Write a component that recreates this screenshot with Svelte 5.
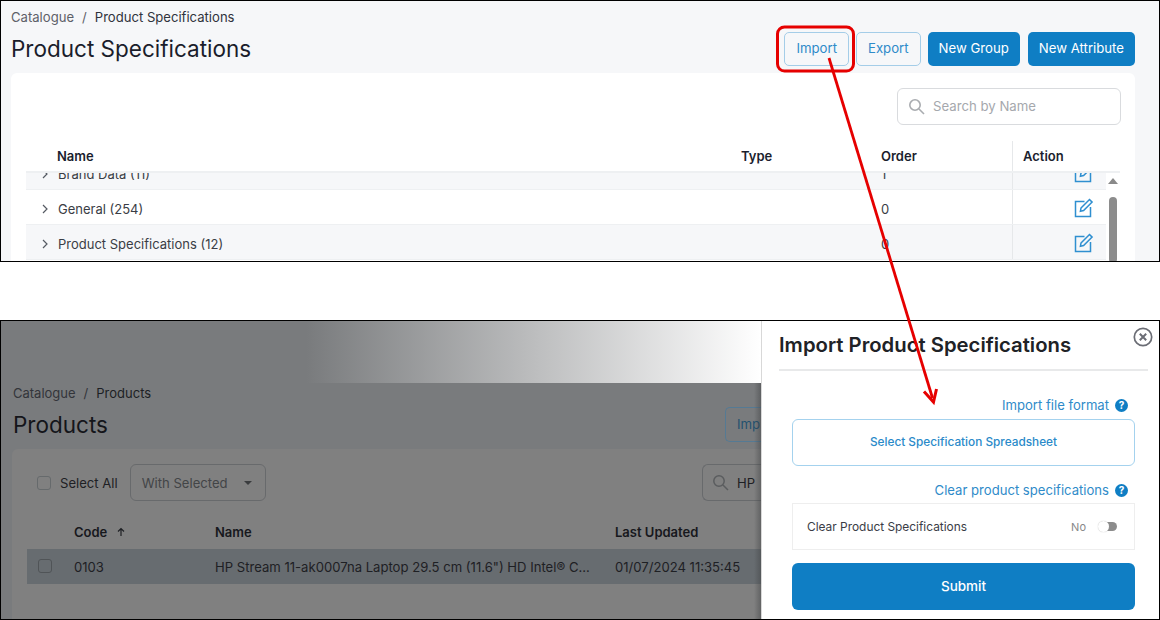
<script>
  const rows = [
    { name: 'Brand Data (11)', order: '1', alt: true, cut: true },
    { name: 'General (254)', order: '0', alt: false },
    { name: 'Product Specifications (12)', order: '0', alt: true }
  ];
</script>

<main class="sheet">
  <section class="shot top">
    <div class="crumbs"><span class="muted">Catalogue</span><span class="muted sep">/</span><span>Product Specifications</span></div>
    <div class="head">
      <h1>Product Specifications</h1>
      <div class="actions">
        <button class="outline">Import</button>
        <button class="outline">Export</button>
        <button class="solid group">New Group</button>
        <button class="solid">New Attribute</button>
      </div>
    </div>
    <div class="card">
      <div class="search-row">
        <div class="search">
          <svg width="17" height="17" viewBox="0 0 17 17" fill="none" stroke="#a9acb0" stroke-width="1.6"><circle cx="7" cy="7" r="5.2" /><path d="M11 11l5 5" /></svg>
          <span>Search by Name</span>
        </div>
      </div>
      <div class="table">
        <div class="thead">
          <span>Name</span><span>Type</span><span>Order</span><span class="action-h">Action</span>
        </div>
        <div class="tbody">
          <div class="rows">
            {#each rows as row}
              <div class="row" class:alt={row.alt} class:cut={row.cut}>
                <svg class="chev" width="8" height="10" viewBox="0 0 8 10" fill="none" stroke="#555a63" stroke-width="1.2"><path d="M2 1l4 4-4 4" /></svg>
                <span class="rname">{row.name}</span>
                <span class="rorder">{row.order}</span>
                <span class="raction">
                  <svg width="20" height="20" viewBox="0 0 20 20" fill="none" stroke="#2f8fd0" stroke-width="1.5"><path d="M10.5 3.5H1.5v15h15V9" /><path d="M7 10L15.5 1.5l2.6 2.6L9.6 12.6l-3.2.6z" /></svg>
                </span>
              </div>
            {/each}
          </div>
          <div class="scrollbar"><i class="up"></i><i class="thumb"></i></div>
        </div>
      </div>
    </div>
  </section>

  <section class="shot bottom">
    <div class="page">
      <div class="strip"></div>
      <div class="page-body">
        <div class="crumbs dim"><span class="muted">Catalogue</span><span class="muted sep">/</span><span>Products</span></div>
        <div class="head dim-head">
          <h1>Products</h1>
          <span class="imp">Imp</span>
        </div>
        <div class="card dark">
          <div class="tools">
            <i class="box"></i>
            <span class="all">Select All</span>
            <div class="with">With Selected<i class="caret"></i></div>
            <div class="hp">
              <svg width="17" height="17" viewBox="0 0 17 17" fill="none" stroke="#5a5c5e" stroke-width="1.5"><circle cx="7" cy="7" r="5.2" /><path d="M11 11l5 5" /></svg>
              <span>HP</span>
            </div>
          </div>
          <div class="p-head">
            <span class="c-code">Code <svg width="10" height="10" viewBox="0 0 10 10" fill="none" stroke="#1e2024" stroke-width="1.2"><path d="M5 9V2M2 4.5L5 1.5l3 3" /></svg></span>
            <span class="c-name">Name</span>
            <span>Last Updated</span>
          </div>
          <div class="p-row">
            <i class="box sel"></i>
            <span class="c-code">0103</span>
            <span class="c-name">HP Stream 11-ak0007na Laptop 29.5 cm (11.6") HD Intel® C...</span>
            <span>01/07/2024 11:35:45</span>
          </div>
        </div>
      </div>
    </div>

    <aside class="dialog">
      <svg class="close" width="20" height="20" viewBox="0 0 20 20" fill="none" stroke="#6b6d75" stroke-width="1.7"><circle cx="10" cy="10" r="8.7" /><path d="M6.8 6.8l6.4 6.4M13.2 6.8l-6.4 6.4" stroke-width="2" /></svg>
      <h2>Import Product Specifications</h2>
      <div class="form">
        <div class="link first">Import file format <i class="help">?</i></div>
        <button class="select">Select Specification Spreadsheet</button>
        <div class="link second">Clear product specifications <i class="help">?</i></div>
        <div class="toggle-row">
          <span>Clear Product Specifications</span>
          <span class="no">No</span>
          <i class="toggle"></i>
        </div>
        <button class="submit">Submit</button>
      </div>
    </aside>
  </section>

  <!-- callout drawn over both shots -->
  <svg class="callout" width="1160" height="620" viewBox="0 0 1160 620" fill="none">
    <rect x="777.5" y="27" width="76" height="44" rx="7" stroke="#e60000" stroke-width="3" />
    <path d="M829 58L932.5 398" stroke="#e60000" stroke-width="2.8" />
    <path d="M924 391.5L933.5 402L936.5 389" stroke="#e60000" stroke-width="3" />
  </svg>
</main>

<style>
  :global(body) {
    margin: 0;
    background: #fff;
  }

  .sheet {
    position: relative;
    width: 1160px;
    height: 620px;
    font-family: Inter, 'Liberation Sans', sans-serif;
    color: #23262f;
    overflow: hidden;
  }

  .shot {
    box-sizing: border-box;
    overflow: hidden;
    border: 1px solid #000;
  }

  .top {
    height: 262px;
    margin: 0 0 58px;
    width: 1160px;
    padding: 8px 24px 0 10px;
    background: #f6f7f9;
  }

  .crumbs {
    display: flex;
    gap: 8px;
    font-size: 13.1px;
    line-height: 16px;
    color: #30333c;
  }

  .muted {
    color: #5d6068;
  }

  .head {
    display: flex;
    justify-content: space-between;
    align-items: center;
    margin-top: 6px;
    height: 35px;
  }

  h1 {
    margin: 0;
    font-size: 22.5px;
    font-weight: 400;
    color: #1a1d2b;
  }

  .actions {
    display: flex;
    gap: 7px;
  }

  button {
    font: inherit;
    font-size: 13.2px;
    height: 34px;
    border-radius: 5px;
    padding: 0 11px 1px;
  }

  .outline {
    border: 1px solid #a4cde8;
    background: #f6f7f9;
    color: #2f8bc9;
  }

  .solid {
    border: 0;
    background: #0f7ec4;
    color: #fff;
  }

  .group {
    margin-right: 1px;
  }

  .card {
    margin-top: 7px;
    background: #fff;
    border-radius: 6px;
    height: 190px;
    padding: 15px 14px 0 15px;
  }

  .search-row {
    display: flex;
    justify-content: flex-end;
  }

  .search {
    box-sizing: border-box;
    width: 224px;
    height: 37px;
    border: 1px solid #d9dbde;
    border-radius: 6px;
    display: flex;
    align-items: center;
    gap: 8px;
    padding: 0 0 1px 10px;
    font-size: 13.2px;
    color: #a5a8ad;
  }

  .thead {
    box-sizing: border-box;
    display: grid;
    grid-template-columns: 684px 140px 131px 1fr;
    height: 34px;
    margin-top: 14px;
    padding: 2px 0 0 31px;
    align-items: center;
    font-size: 13px;
    font-weight: 600;
    color: #1b1e2e;
    border-bottom: 2px solid #eef0f2;
    width: 1094px;
  }

  .action-h {
    align-self: stretch;
    display: flex;
    align-items: center;
    padding-left: 10px;
    border-left: 1px solid #e6e8ea;
  }

  .tbody {
    display: flex;
    width: 1094px;
    height: 90px;
    overflow: hidden;
  }

  .rows {
    width: 1080px;
  }

  .row {
    display: grid;
    grid-template-columns: 31px 824px 131px 1fr;
    align-items: center;
    height: 35px;
    box-sizing: border-box;
    padding-top: 4px;
    font-size: 13px;
    border-bottom: 1px solid #eef0f2;
    color: #3a3d45;
  }

  .row.alt {
    background: #f6f7f9;
  }

  .row.cut {
    margin-top: -18px;
  }

  .rname {
    margin-left: 1px;
  }

  .chev {
    justify-self: end;
    margin-right: 8px;
  }

  .raction {
    align-self: stretch;
    display: flex;
    align-items: center;
    justify-content: flex-end;
    margin-top: -4px;
    padding: 2px 12px 0 0;
    border-left: 1px solid #e6e8ea;
  }

  .scrollbar {
    flex: 1;
    background: #fff;
    display: flex;
    flex-direction: column;
    align-items: center;
    padding-top: 5px;
  }

  .up {
    width: 0;
    height: 0;
    border: 5px solid transparent;
    border-top: 0;
    border-bottom: 6px solid #8a8a8a;
  }

  .thumb {
    width: 8px;
    height: 70px;
    margin-top: 13px;
    border-radius: 4px;
    background: #8c8c8c;
  }

  .bottom {
    height: 300px;
    width: 1160px;
    display: flex;
    position: relative;
  }

  .page {
    width: 760px;
    flex: none;
    background: #797b7d;
    display: flex;
    flex-direction: column;
  }

  .strip {
    height: 62px;
    flex: none;
    background: linear-gradient(90deg, #797b7d 0 305px, #ffffff 760px);
  }

  .page-body {
    position: relative;
    flex: 1;
    padding: 2px 0 0 12px;
  }

  .page-body::after {
    content: '';
    position: absolute;
    top: 0;
    right: 0;
    bottom: 0;
    width: 7px;
    background: linear-gradient(90deg, transparent, rgba(60, 62, 64, 0.45));
  }

  .dim {
    color: #1d1f24;
    font-size: 13px;
  }

  .dim .muted {
    color: #33353a;
  }

  .dim-head {
    margin-top: 6px;
    justify-content: flex-start;
  }

  .dim-head h1 {
    color: #14151a;
  }

  .imp {
    position: absolute;
    left: 724px;
    top: 24px;
    box-sizing: border-box;
    width: 36px;
    height: 35px;
    padding: 8px 0 0 11px;
    border: 1px solid #557a94;
    border-right: 0;
    border-radius: 5px 0 0 5px;
    font-size: 13.2px;
    color: #23516f;
    overflow: hidden;
  }

  .card.dark {
    margin: 7px 0 0 -1px;
    background: #808080;
    border-radius: 6px 0 0 0;
    height: 170px;
    padding: 15px 0 0 0;
    box-sizing: border-box;
    font-size: 13.1px;
    color: #1e2024;
    overflow: hidden;
  }

  .tools {
    display: flex;
    align-items: center;
    height: 37px;
    position: relative;
  }

  .box {
    display: block;
    box-sizing: border-box;
    width: 14px;
    height: 14px;
    border: 1px solid #666a6c;
    border-radius: 3px;
    margin-left: 25px;
    flex: none;
  }

  .box.sel {
    border-color: #505457;
  }

  .all {
    margin-left: 9px;
  }

  .with {
    box-sizing: border-box;
    width: 136px;
    height: 37px;
    margin-left: 12px;
    padding-left: 11px;
    display: flex;
    align-items: center;
    border: 1px solid #686a6c;
    border-radius: 6px;
    color: #434547;
  }

  .caret {
    margin-left: 16px;
    border: 4px solid transparent;
    border-top: 4px solid #3a3c3e;
    border-bottom: 0;
  }

  .hp {
    position: absolute;
    left: 690px;
    top: 0;
    box-sizing: border-box;
    width: 70px;
    height: 37px;
    display: flex;
    align-items: center;
    gap: 8px;
    padding-left: 9px;
    border: 1px solid #686a6c;
    border-right: 0;
    border-radius: 6px 0 0 6px;
  }

  .p-head,
  .p-row {
    display: grid;
    grid-template-columns: 141px 400px 1fr;
    align-items: center;
    padding-left: 62px;
  }

  .p-head {
    height: 35px;
    margin-top: 13px;
    font-size: 13px;
    font-weight: 600;
    color: #17181d;
  }

  .p-row {
    position: relative;
    box-sizing: border-box;
    height: 35px;
    margin-left: 15px;
    padding: 1px 0 0 47px;
    background: #676c70;
  }

  .p-row .box {
    position: absolute;
    left: 11px;
    margin-left: 0;
    top: 10px;
  }

  .c-code svg {
    margin-left: 5px;
  }

  .dialog {
    position: relative;
    flex: 1;
    background: #fff;
    border-left: 1px solid #d8d8d8;
    padding: 0 11px 0 17px;
  }

  .close {
    position: absolute;
    top: 6px;
    right: 6px;
  }

  h2 {
    margin: 0;
    padding: 9px 0 10px;
    height: 29px;
    font-size: 20.3px;
    line-height: 29px;
    font-weight: 600;
    color: #202226;
    border-bottom: 2px solid #e8e9ea;
  }

  .form {
    padding: 0 0 0 13px;
    width: 343px;
  }

  .link {
    display: flex;
    justify-content: flex-end;
    align-items: center;
    gap: 6px;
    font-size: 13.1px;
    color: #2f8bc9;
    padding-right: 7px;
    height: 18px;
  }

  .link.first {
    margin-top: 25px;
  }

  .link.second {
    margin-top: 15px;
  }

  .help {
    width: 13px;
    height: 13px;
    border-radius: 50%;
    background: #0f7ec4;
    color: #fff;
    font: 700 10px/13px Inter, sans-serif;
    text-align: center;
  }

  .select {
    display: block;
    width: 100%;
    height: 47px;
    margin-top: 5px;
    background: #fff;
    border: 1px solid #a4d2ee;
    border-radius: 6px;
    color: #2a8ac9;
    font-size: 11.8px;
    font-weight: 500;
  }

  .toggle-row {
    box-sizing: border-box;
    height: 47px;
    margin-top: 4px;
    padding: 0 17px 0 14px;
    border: 1px solid #eeeeee;
    display: flex;
    align-items: center;
    font-size: 11.9px;
    color: #3a3c46;
  }

  .no {
    margin-left: auto;
    font-size: 11px;
    color: #888;
  }

  .toggle {
    position: relative;
    width: 18px;
    height: 9px;
    margin-left: 13px;
    border-radius: 5px;
    background: #8c8c8c;
  }

  .toggle::before {
    content: '';
    position: absolute;
    left: -1px;
    top: -1px;
    width: 11px;
    height: 11px;
    border-radius: 50%;
    background: #fff;
    box-shadow: 0 0 1px #aaa;
  }

  .submit {
    display: block;
    width: 100%;
    height: 47px;
    margin-top: 13px;
    border: 0;
    border-radius: 6px;
    background: #0f7ec4;
    color: #fff;
    font-size: 13.5px;
    font-weight: 500;
  }

  .callout {
    position: absolute;
    left: 0;
    top: 0;
    pointer-events: none;
  }
</style>
